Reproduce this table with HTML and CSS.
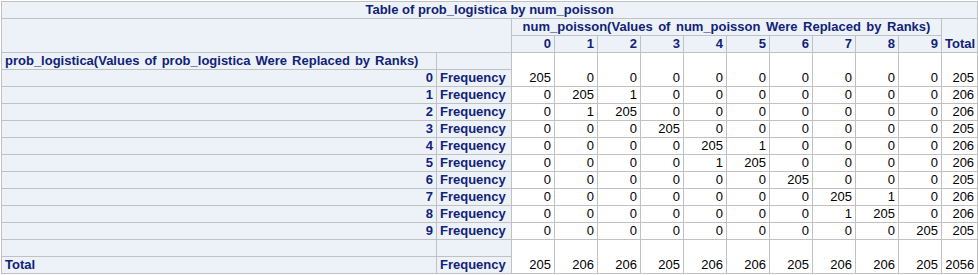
FILE: index.html
```html
<!DOCTYPE html>
<html>
<head>
<meta charset="utf-8">
<link rel="stylesheet" href="styles.css">
</head>
<body>
<table class="xtab">
<colgroup>
<col class="c-row"><col class="c-stat">
<col class="c-d"><col class="c-d"><col class="c-d"><col class="c-d"><col class="c-d">
<col class="c-d"><col class="c-d"><col class="c-d"><col class="c-d"><col class="c-d">
<col class="c-tot">
</colgroup>
<thead>
<tr><th class="hd center" colspan="13">Table of prob_logistica by num_poisson</th></tr>
<tr>
<th class="hd" colspan="2" rowspan="2"></th>
<th class="hd center wide-col" colspan="10">num_poisson(Values of num_poisson Were Replaced by Ranks)</th>
<th class="hd right bottom" rowspan="2">Total</th>
</tr>
<tr>
<th class="hd right">0</th><th class="hd right">1</th><th class="hd right">2</th><th class="hd right">3</th><th class="hd right">4</th>
<th class="hd right">5</th><th class="hd right">6</th><th class="hd right">7</th><th class="hd right">8</th><th class="hd right">9</th>
</tr>
</thead>
<tbody>
<tr>
<th class="hd left wide-row">prob_logistica(Values of prob_logistica Were Replaced by Ranks)</th>
<th class="hd"></th>
<td class="dt" rowspan="2">205</td><td class="dt" rowspan="2">0</td><td class="dt" rowspan="2">0</td><td class="dt" rowspan="2">0</td><td class="dt" rowspan="2">0</td>
<td class="dt" rowspan="2">0</td><td class="dt" rowspan="2">0</td><td class="dt" rowspan="2">0</td><td class="dt" rowspan="2">0</td><td class="dt" rowspan="2">0</td>
<td class="dt" rowspan="2">205</td>
</tr>
<tr><th class="hd right">0</th><th class="hd left">Frequency</th></tr>
<tr><th class="hd right">1</th><th class="hd left">Frequency</th>
<td class="dt">0</td><td class="dt">205</td><td class="dt">1</td><td class="dt">0</td><td class="dt">0</td><td class="dt">0</td><td class="dt">0</td><td class="dt">0</td><td class="dt">0</td><td class="dt">0</td><td class="dt">206</td></tr>
<tr><th class="hd right">2</th><th class="hd left">Frequency</th>
<td class="dt">0</td><td class="dt">1</td><td class="dt">205</td><td class="dt">0</td><td class="dt">0</td><td class="dt">0</td><td class="dt">0</td><td class="dt">0</td><td class="dt">0</td><td class="dt">0</td><td class="dt">206</td></tr>
<tr><th class="hd right">3</th><th class="hd left">Frequency</th>
<td class="dt">0</td><td class="dt">0</td><td class="dt">0</td><td class="dt">205</td><td class="dt">0</td><td class="dt">0</td><td class="dt">0</td><td class="dt">0</td><td class="dt">0</td><td class="dt">0</td><td class="dt">205</td></tr>
<tr><th class="hd right">4</th><th class="hd left">Frequency</th>
<td class="dt">0</td><td class="dt">0</td><td class="dt">0</td><td class="dt">0</td><td class="dt">205</td><td class="dt">1</td><td class="dt">0</td><td class="dt">0</td><td class="dt">0</td><td class="dt">0</td><td class="dt">206</td></tr>
<tr><th class="hd right">5</th><th class="hd left">Frequency</th>
<td class="dt">0</td><td class="dt">0</td><td class="dt">0</td><td class="dt">0</td><td class="dt">1</td><td class="dt">205</td><td class="dt">0</td><td class="dt">0</td><td class="dt">0</td><td class="dt">0</td><td class="dt">206</td></tr>
<tr><th class="hd right">6</th><th class="hd left">Frequency</th>
<td class="dt">0</td><td class="dt">0</td><td class="dt">0</td><td class="dt">0</td><td class="dt">0</td><td class="dt">0</td><td class="dt">205</td><td class="dt">0</td><td class="dt">0</td><td class="dt">0</td><td class="dt">205</td></tr>
<tr><th class="hd right">7</th><th class="hd left">Frequency</th>
<td class="dt">0</td><td class="dt">0</td><td class="dt">0</td><td class="dt">0</td><td class="dt">0</td><td class="dt">0</td><td class="dt">0</td><td class="dt">205</td><td class="dt">1</td><td class="dt">0</td><td class="dt">206</td></tr>
<tr><th class="hd right">8</th><th class="hd left">Frequency</th>
<td class="dt">0</td><td class="dt">0</td><td class="dt">0</td><td class="dt">0</td><td class="dt">0</td><td class="dt">0</td><td class="dt">0</td><td class="dt">1</td><td class="dt">205</td><td class="dt">0</td><td class="dt">206</td></tr>
<tr><th class="hd right">9</th><th class="hd left">Frequency</th>
<td class="dt">0</td><td class="dt">0</td><td class="dt">0</td><td class="dt">0</td><td class="dt">0</td><td class="dt">0</td><td class="dt">0</td><td class="dt">0</td><td class="dt">0</td><td class="dt">205</td><td class="dt">205</td></tr>
<tr>
<th class="hd"></th><th class="hd"></th>
<td class="dt" rowspan="2">205</td><td class="dt" rowspan="2">206</td><td class="dt" rowspan="2">206</td><td class="dt" rowspan="2">205</td><td class="dt" rowspan="2">206</td>
<td class="dt" rowspan="2">206</td><td class="dt" rowspan="2">205</td><td class="dt" rowspan="2">206</td><td class="dt" rowspan="2">206</td><td class="dt" rowspan="2">205</td>
<td class="dt" rowspan="2">2056</td>
</tr>
<tr><th class="hd left">Total</th><th class="hd left">Frequency</th></tr>
</tbody>
</table>
</body>
</html>
```
FILE: styles.css
```css
html, body {
  margin: 0;
  padding: 0;
  background: #ffffff;
}
body {
  padding: 1px 0 0 1px;
}
.xtab {
  border-collapse: collapse;
  table-layout: fixed;
  width: 976px;
  font-family: "Liberation Sans", Arial, sans-serif;
  font-size: 13px;
  border: 1px solid #c1c1c1;
}
.c-row { width: 435px; }
.c-stat { width: 75px; }
.c-d { width: 43px; }
.c-tot { width: 36px; }
.xtab th, .xtab td {
  border: 1px solid #c1c1c1;
  height: 16px;
  line-height: 16px;
  padding: 0 3px;
  white-space: nowrap;
  overflow: hidden;
}
.hd {
  background: #edf2f9;
  color: #112277;
  font-weight: bold;
  vertical-align: middle;
}
.dt {
  background: #ffffff;
  color: #000000;
  font-weight: normal;
  text-align: right;
  vertical-align: bottom;
}
.wide-row { word-spacing: 1.4px; }
.wide-col { word-spacing: 1.9px; }
.center { text-align: center; }
.left { text-align: left; }
.right { text-align: right; }
.bottom { vertical-align: bottom; }
```
